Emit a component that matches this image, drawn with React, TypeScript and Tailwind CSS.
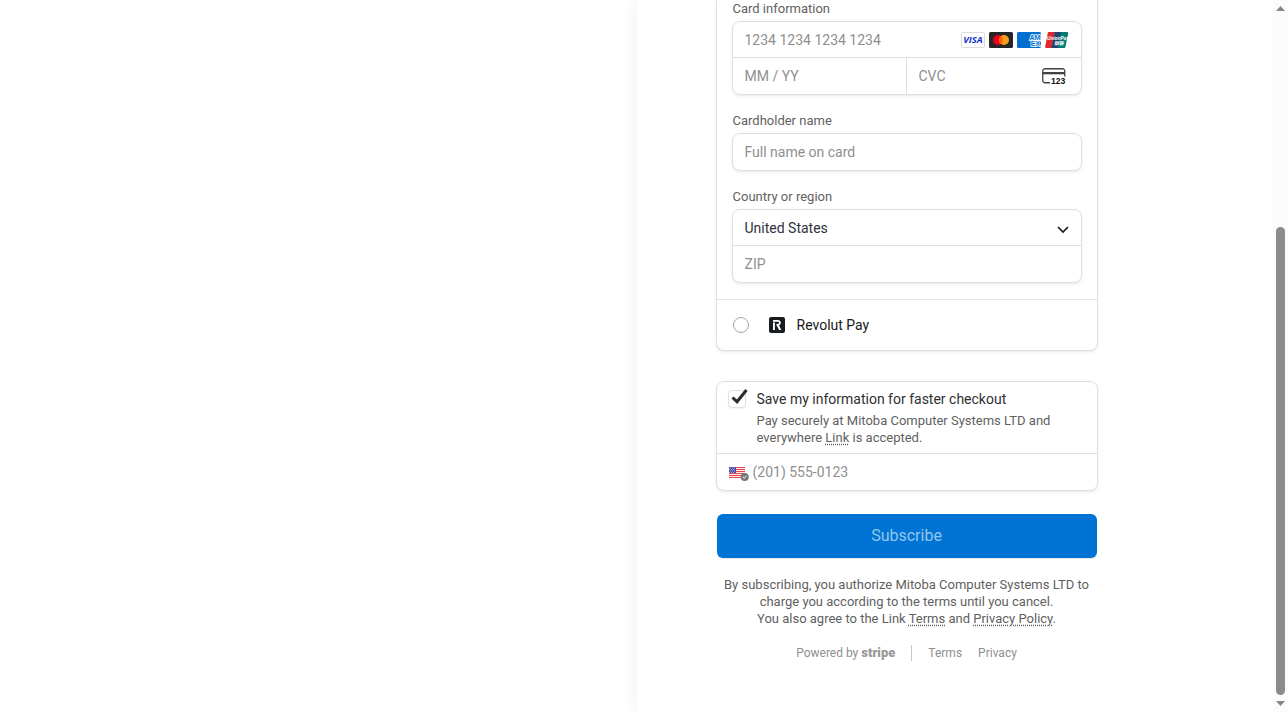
import { useState } from "react";
import type { ReactNode } from "react";

const fieldText =
  "w-full bg-transparent text-sm text-[#30313d] outline-none placeholder:text-[#8f8f8f] placeholder:opacity-100";
const panel =
  "rounded-lg border border-[#dfdfdf] bg-white shadow-[0_2px_4px_rgba(0,0,0,0.05),0_1px_1px_rgba(0,0,0,0.03)]";
const label = "block pl-px text-[13px] leading-[17px] text-[#5f5f5f]";
const dotted = "underline decoration-dotted underline-offset-2";

function VisaIcon() {
  return (
    <svg width="24" height="16" viewBox="0 0 24 16" aria-label="Visa" role="img">
      <rect x="0.5" y="0.5" width="23" height="15" rx="1" fill="#fff" stroke="#dcdcdc" />
      <text x="12" y="11.4" textAnchor="middle" fontFamily="Open Sans, sans-serif" fontSize="9.4" fontWeight="700" fontStyle="italic" fill="#1434cb">
        VISA
      </text>
    </svg>
  );
}

function MastercardIcon() {
  return (
    <svg width="24" height="16" viewBox="0 0 24 16" aria-label="Mastercard" role="img">
      <rect width="24" height="16" rx="1.5" fill="#252525" />
      <circle cx="9" cy="8" r="5" fill="#eb001b" />
      <circle cx="15" cy="8" r="5" fill="#f79e1b" />
      <path d="M12 4a5 5 0 0 1 0 8 5 5 0 0 1 0-8Z" fill="#ff5f00" />
    </svg>
  );
}

function AmexIcon() {
  return (
    <svg width="24" height="16" viewBox="0 0 24 16" aria-label="American Express" role="img">
      <rect width="24" height="16" rx="1.5" fill="#016fd0" />
      <g fontFamily="Liberation Sans, Arial, sans-serif" fontSize="7" fontWeight="700" fill="#016fd0" stroke="#fff" strokeWidth="1.4" paintOrder="stroke">
        <text x="12.4" y="7.8">AM</text>
        <text x="13.8" y="13.6">EX</text>
      </g>
    </svg>
  );
}

function UnionPayIcon() {
  return (
    <svg width="24" height="16" viewBox="0 0 24 16" aria-label="UnionPay" role="img">
      <path d="M4.2 0H10L6.8 16H1.4C.5 16 0 15.4.2 14.5L2.7 1.3C2.9.5 3.4 0 4.2 0Z" fill="#dd2a2c" />
      <path d="M9.6 0h7l-3 16H6.400Z" fill="#22456f" />
      <path d="M16 0h6c1 0 1.400.6 1.200 1.400L20.500 14.700C20.300 15.500 19.800 16 19 16h-6.200Z" fill="#047c74" />
      <g fill="#fff" fontStyle="italic" fontWeight="700">
        <text x="2" y="8" fontFamily="Liberation Sans, Arial, sans-serif" fontSize="4.8">UnionPay</text>
        <text x="9" y="13" fontFamily="Noto Sans CJK SC, sans-serif" fontSize="4.8">银联</text>
      </g>
    </svg>
  );
}

function CvcIcon() {
  return (
    <svg width="24" height="18" viewBox="0 0 24 18" aria-hidden="true">
      <path d="M8 15.750H3A2.250 2.250 0 0 1 .750 13.500V4A2.250 2.250 0 0 1 3 1.750H20.500A2.250 2.250 0 0 1 22.750 4V9.500" fill="none" stroke="#424242" strokeWidth="1.300" />
      <path d="M0.500 5h22.500v2.300H.500z" fill="#424242" />
      <text x="9" y="17" fontFamily="Liberation Sans, Arial, sans-serif" fontSize="8.600" fontWeight="700" fill="#111">
        123
      </text>
    </svg>
  );
}

function RevolutIcon() {
  return (
    <svg width="16" height="16" viewBox="0 0 16 16" aria-hidden="true">
      <rect width="16" height="16" rx="2" fill="#191c1f" />
      <path d="M4 5.500h1.900V13H4z" fill="#fff" />
      <path d="M4 3h4.800c1.800 0 3 1 3 2.700 0 1.200-.7 2.100-1.800 2.500L12.300 13h-2.200L7.400 8V6.900h1.300c.8 0 1.300-.4 1.300-1.100s-.5-1.100-1.300-1.100H4Z" fill="#fff" />
    </svg>
  );
}

function FlagIcon() {
  return (
    <svg width="20" height="18" viewBox="0 0 20 18" aria-hidden="true" className="shrink-0">
      <path fill="#fdeeee" d="M0 4h16v11H0z" />
      <path d="M0 4h16v1H0zM0 6h16v1H0zM0 8h16v1H0zM0 10h16v1H0zM0 12h16v1H0zM0 14h16v1H0z" fill="#e8484a" />
      <path fill="#4a4ca3" d="M0 4h7v6H0z" />
      <path d="M1 5h6M0 6.500h6M1 8h6M0 9.500h6" stroke="#c9cbe8" strokeWidth=".8" strokeDasharray="1 1" />
      <circle cx="15.700" cy="14" r="4" fill="#757575" />
      <path d="m13.700 13.800 1.500 1.400 2.500-2.500" fill="none" stroke="#ccc" strokeWidth="1.200" />
    </svg>
  );
}

function Group({ title, htmlFor, children }: { title: string; htmlFor: string; children: ReactNode }) {
  return (
    <div className="flex flex-col gap-1">
      <label htmlFor={htmlFor} className={label}>{title}</label>
      <div className={panel}>{children}</div>
    </div>
  );
}

function Scrollbar() {
  return (
    <div aria-hidden="true" className="sticky top-0 flex h-screen w-[15px] shrink-0 flex-col items-center bg-[#fcfcfc] py-1.5">
      <svg width="9" height="5" viewBox="0 0 9 5"><path d="M4.500 0 9 5H0Z" fill="#858585" /></svg>
      <div className="grow-[216]" />
      <div className="w-[9px] grow-[467] rounded-full bg-[#8b8b8b]" />
      <div className="h-1.5" />
      <svg width="9" height="5" viewBox="0 0 9 5"><path d="M0 0h9L4.500 5Z" fill="#858585" /></svg>
    </div>
  );
}

export default function App() {
  const [save, setSave] = useState(true);
  const [revolut, setRevolut] = useState(false);

  return (
    <div className="flex min-h-screen bg-white font-['Roboto',sans-serif] text-[#5f5f5f]">
      <div className="flex-1" />
      <main className="flex-1 shadow-[-6px_0_14px_rgba(0,0,0,0.04)]">
        <form className="ml-[79px] max-w-[382px]" onSubmit={(e) => e.preventDefault()}>
          <section className={`${panel} rounded-t-none border-t-0`}>
            <div className="flex flex-col gap-[17px] px-[15px] pb-4">
              <Group title="Card information" htmlFor="card-number">
                <div className="flex h-9 items-center border-b border-[#dfdfdf] px-3">
                  <input id="card-number" className={fieldText} placeholder="1234 1234 1234 1234" />
                  <div className="flex shrink-0 gap-1">
                    <VisaIcon />
                    <MastercardIcon />
                    <AmexIcon />
                    <UnionPayIcon />
                  </div>
                </div>
                <div className="grid h-9 grid-cols-2">
                  <input aria-label="Expiration" className={`${fieldText} border-r border-[#dfdfdf] pl-3`} placeholder="MM / YY" />
                  <div className="flex items-center pr-[15px] pl-3">
                    <input aria-label="CVC" className={fieldText} placeholder="CVC" />
                    <div className="shrink-0"><CvcIcon /></div>
                  </div>
                </div>
              </Group>
              <Group title="Cardholder name" htmlFor="name">
                <input id="name" className={`${fieldText} block h-9 px-3`} placeholder="Full name on card" />
              </Group>
              <Group title="Country or region" htmlFor="country">
                <div className="relative h-9 border-b border-[#dfdfdf]">
                  <select id="country" className="h-full w-full appearance-none rounded-t-lg bg-transparent px-3 text-sm text-[#30313d] outline-none">
                    <option>United States</option>
                    <option>Canada</option>
                    <option>United Kingdom</option>
                  </select>
                  <svg className="pointer-events-none absolute top-4 right-3" width="12" height="8" viewBox="0 0 12 8" aria-hidden="true">
                    <path d="m1 1 5 5 5-5" fill="none" stroke="#1a1a1a" strokeWidth="1.700" />
                  </svg>
                </div>
                <input aria-label="ZIP" className={`${fieldText} block h-9 px-3`} placeholder="ZIP" />
              </Group>
            </div>
            <label className="flex h-[51px] items-center border-t border-[#e6e6e6] pl-4 text-sm text-[#1a1a1a]">
              <input
                type="radio"
                name="method"
                checked={revolut}
                onChange={() => setRevolut(true)}
                className="mr-5 size-4 appearance-none rounded-full border border-[#a8a8a8] checked:border-4 checked:border-[#0074d4]"
              />
              <RevolutIcon />
              <span className="ml-3">Revolut Pay</span>
            </label>
          </section>

          <section className={`${panel} mt-[30px]`}>
            <div className="flex gap-[11px] pt-2 pr-4 pb-[7px] pl-[11px]">
              <div className="relative h-[18px] shrink-0">
                <input
                  id="save"
                  type="checkbox"
                  checked={save}
                  onChange={(e) => setSave(e.target.checked)}
                  className="block size-[18px] appearance-none rounded-sm border border-[#e0e0e0] bg-white shadow-[0_1px_2px_rgba(0,0,0,0.06)]"
                />
                {save && (
                  <svg className="pointer-events-none absolute -top-px left-[3px]" width="18" height="16" viewBox="0 0 18 16" aria-hidden="true">
                    <path d="m1.500 8.500 4.500 4.200L15.500 1" fill="none" stroke="#2b2b2b" strokeWidth="3" />
                  </svg>
                )}
              </div>
              <div>
                <label htmlFor="save" className="block text-sm leading-[18px] text-[#303030]">
                  Save my information for faster checkout
                </label>
                <p className="mt-1 text-[13px] leading-[17px]">
                  Pay securely at Mitoba Computer Systems LTD and everywhere <a href="#link" className={dotted}>Link</a> is accepted.
                </p>
              </div>
            </div>
            <div className="flex h-[37px] items-center gap-1 border-t border-[#dfdfdf] px-3">
              <FlagIcon />
              <input aria-label="Phone number" type="tel" className={fieldText} placeholder="(201) 555-0123" />
            </div>
          </section>

          <div className="px-px">
            <button type="submit" className="mt-[23px] block h-11 w-full rounded-md bg-[#0074d4] text-base text-[#94c5ed] shadow-[0_1px_1px_rgba(0,0,0,0.1)]">
              Subscribe
            </button>
            <p className="mt-[18px] text-center text-[13px] leading-[17px]">
              By subscribing, you authorize Mitoba Computer Systems LTD to charge you according to the terms until you cancel.
              <br />
              You also agree to the Link <a href="#terms" className={dotted}>Terms</a> and <a href="#privacy" className={dotted}>Privacy Policy</a>.
            </p>
          </div>

          <footer className="mt-[18px] flex h-4 items-center justify-center text-xs text-[#8f8f8f]">
            <a href="#stripe" className="flex items-center gap-[3px]">
              Powered by
              <span className="text-[13px] leading-4 font-black text-[#9a9a9a]">stripe</span>
            </a>
            <span className="mx-4 h-4 w-px bg-[#c8c8c8]" />
            <a href="#site-terms">Terms</a>
            <a href="#site-privacy" className="ml-4">Privacy</a>
          </footer>
        </form>
      </main>
      <Scrollbar />
    </div>
  );
}
